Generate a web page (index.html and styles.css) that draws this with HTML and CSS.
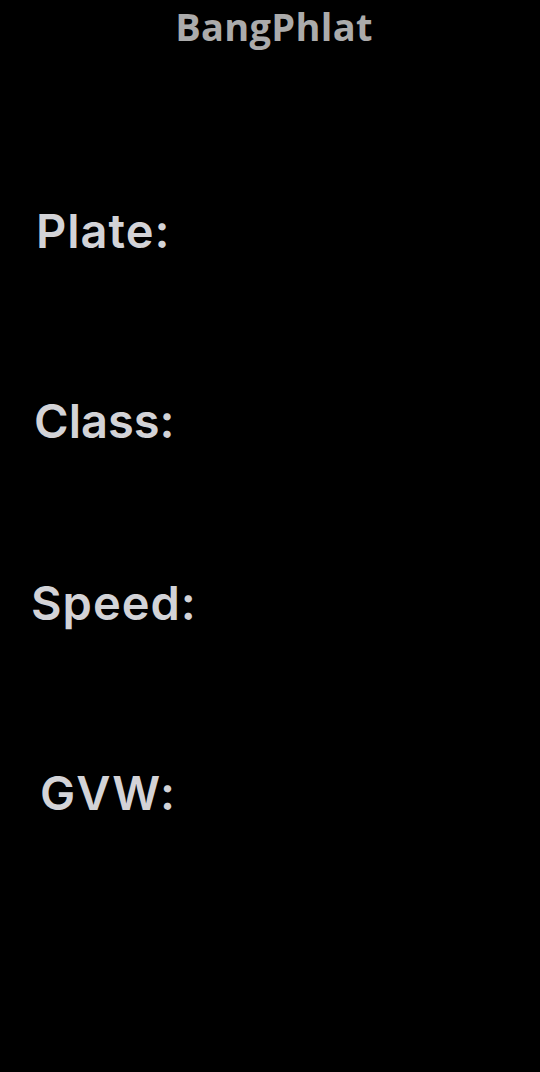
FILE: index.html
```html
<!DOCTYPE html>
<html>
<head>
<meta charset="utf-8">
<link rel="stylesheet" href="styles.css">
</head>
<body>
<div class="screen">
  <h1 class="title">BangPhlat</h1>
  <div class="fields">
    <div class="field field-plate">Plate:</div>
    <div class="field field-class">Class:</div>
    <div class="field field-speed">Speed:</div>
    <div class="field field-gvw">GVW:</div>
  </div>
</div>
</body>
</html>
```
FILE: styles.css
```css
html, body {
  margin: 0;
  padding: 0;
  background: #000;
}
.screen {
  width: 540px;
  height: 1072px;
  background: #000;
  display: flex;
  flex-direction: column;
}
.title {
  margin: 0;
  padding-left: 8px;
  text-align: center;
  font-family: "Open Sans", sans-serif;
  font-weight: 700;
  font-size: 38px;
  line-height: 52px;
  color: #ababab;
  letter-spacing: 0.3px;
}
.fields {
  display: flex;
  flex-direction: column;
  padding-top: 155px;
}
.field {
  font-family: Inter, sans-serif;
  font-weight: 600;
  font-size: 47px;
  line-height: 48px;
  letter-spacing: 1px;
  color: #d3d3d7;
}
.field-plate { padding-left: 36px; }
.field-class { padding-left: 34px; margin-top: 142px; letter-spacing: 0; }
.field-speed { padding-left: 31px; margin-top: 134px; }
.field-gvw { padding-left: 40px; margin-top: 142px; letter-spacing: 2px; }
```
